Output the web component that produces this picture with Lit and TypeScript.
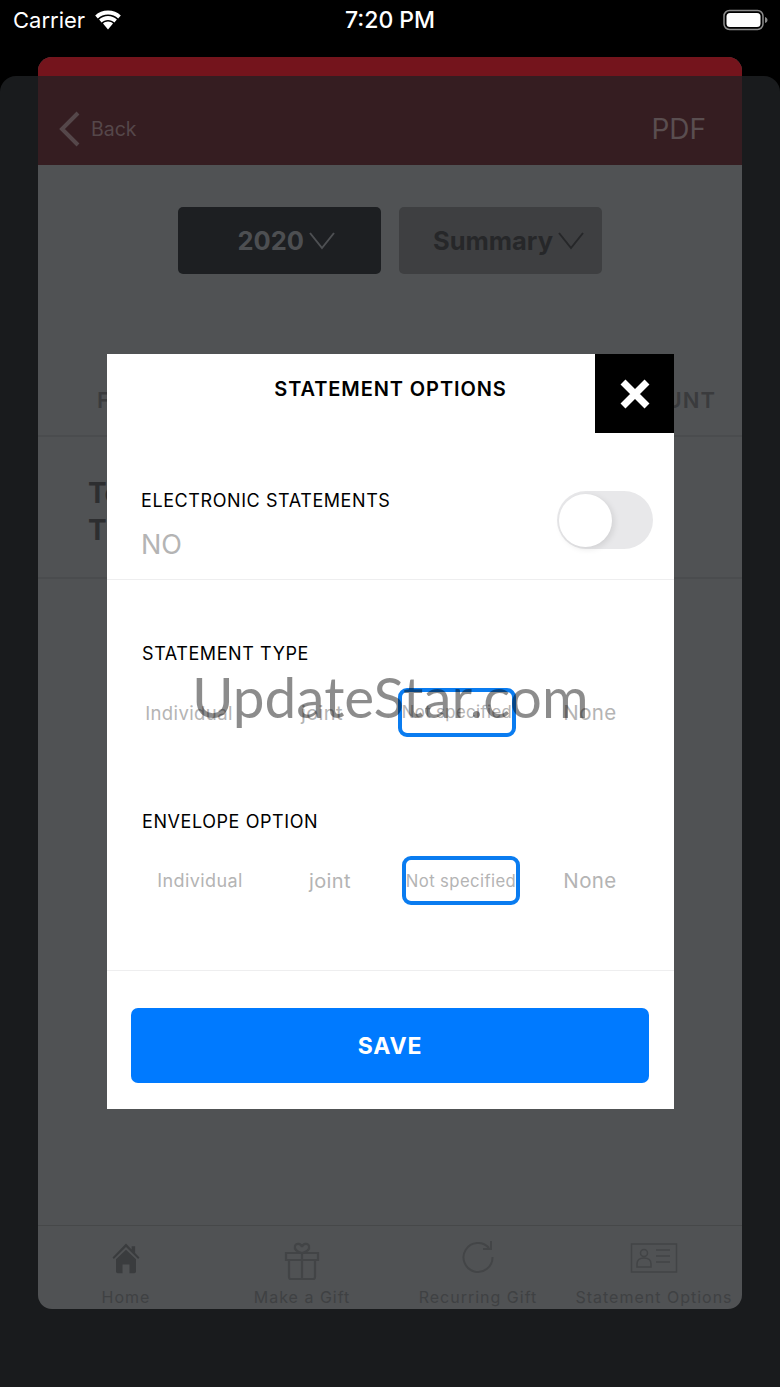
import { LitElement, html, css } from 'lit';
import { customElement } from 'lit/decorators.js';

const chevron = html`<svg class="drop" viewBox="0 0 26 18" fill="none" stroke="currentColor" stroke-width="2"><path d="M1 1l12 15L25 1" /></svg>`;

const tabs = [
    {
        label: 'Home',
        icon: html`<svg viewBox="-3 1 46 46" width="40" height="40" fill="#3a3c3e"><path d="M20 4L4.5 20l1.5 1.6L20 8l14 13.6 1.5-1.6-5-5.2V7h-4v3.8z" /><path d="M8.5 22L20 11l11.5 11v14a2 2 0 0 1-2 2H24V28h-8v10h-5.5a2 2 0 0 1-2-2z" /></svg>`,
    },
    {
        label: 'Make a Gift',
        icon: html`<svg viewBox="0 0 40 40" width="40" height="40" fill="none" stroke="#424446" stroke-width="2.2"><path d="M4 12h32v7H4zM7 19v17a2 2 0 0 0 2 2h22a2 2 0 0 0 2-2V19M20 12v26" /><path d="M20 12c-4-1-8-3-7-7 1-3 6-3 7 1 1-4 6-4 7-1 1 4-3 6-7 7z" /></svg>`,
    },
    {
        label: 'Recurring Gift',
        icon: html`<svg viewBox="0 3 40 40" width="40" height="40" fill="none" stroke="#434547" stroke-width="2"><path d="M31 10a14.5 14.5 0 1 0 3.500 9" /><path d="M33 3v8h-8" /></svg>`,
    },
    {
        label: 'Statement Options',
        icon: html`<svg viewBox="0 1 48 40" width="48" height="40" fill="none" stroke="#424446" stroke-width="1.500"><path d="M1.500 4h45v28h-45z" /><circle cx="14" cy="13" r="3.500" /><path d="M7 27v-3c0-4 3-6 7-6s7 2 7 6v3zM26 10h14M26 16h14M26 22h14" /></svg>`,
    },
];

@customElement('app-root')
class AppRoot extends LitElement {
    static styles = css`
        :host {
            display: block;
            position: relative;
            width: 780px;
            height: 1387px;
            overflow: hidden;
            background: #000;
            font-family: Inter, 'Liberation Sans', sans-serif;
        }

        .sheet {
            position: absolute;
            top: 76px;
            left: 0;
            right: 0;
            bottom: 0;
            background: #191b1d;
            border-radius: 16px 16px 0 0;
        }

        .status {
            position: relative;
            display: flex;
            align-items: center;
            height: 40px;
            padding: 0 12px 0 13px;
            color: #fff;
            font-size: 22px;
        }
        .status .time {
            position: absolute;
            left: 0;
            right: 0;
            text-align: center;
            font-size: 23px;
            font-weight: 500;
        }
        .status .wifi {
            margin-left: 9px;
        }
        .battery {
            margin-left: auto;
        }

        .card {
            position: relative;
            display: flex;
            flex-direction: column;
            height: 1252px;
            margin: 17px 38px 0;
            background: #505254;
            border-radius: 14px;
            overflow: hidden;
        }
        .strip {
            height: 19px;
            background: #74141c;
        }
        .bar {
            display: flex;
            align-items: center;
            height: 89px;
            box-sizing: border-box;
            padding: 17px 36px 0 21px;
            background: #351d21;
            color: #55474a;
            font-size: 19.500px;
        }
        .bar .back {
            margin-right: 11px;
        }
        .bar .pdf {
            margin-left: auto;
            font-size: 28px;
            color: #5a4e50;
        }

        .selectors {
            display: flex;
            justify-content: center;
            gap: 18px;
            padding-top: 42px;
        }
        .select {
            display: flex;
            align-items: center;
            justify-content: flex-end;
            gap: 5px;
            width: 203px;
            height: 67px;
            box-sizing: border-box;
            padding-right: 18px;
            border-radius: 5px;
            font-size: 25.500px;
            font-weight: 700;
        }
        .select.dark {
            background: #1d1f22;
            color: #4d4f52;
            padding-right: 46px;
        }
        .select.grey {
            background: #3e3f41;
            color: #262729;
        }
        .drop {
            width: 26px;
            height: 18px;
        }

        .head {
            display: flex;
            justify-content: space-between;
            padding: 114px 26px 23px 59px;
            border-bottom: 2px solid #4a4c4e;
            font-size: 22px;
            line-height: 24px;
            font-weight: 600;
            letter-spacing: 1px;
            color: #3a3b3d;
        }
        .totals {
            padding: 38px 0 28px 50px;
            border-bottom: 2px solid #4a4c4e;
            font-size: 28px;
            line-height: 37px;
            font-weight: 700;
            color: #2d2e30;
        }

        .tabbar {
            display: grid;
            grid-template-columns: repeat(4, 1fr);
            height: 83px;
            margin-top: auto;
            border-top: 1px solid #464849;
        }
        .tab {
            display: flex;
            flex-direction: column;
            align-items: center;
            padding-top: 15px;
            font-size: 16px;
            letter-spacing: 1px;
            white-space: nowrap;
            color: #3f4143;
        }
        .tab svg {
            height: 40px;
        }
        .tab span {
            margin-top: 6px;
        }

        .modal {
            position: absolute;
            top: 354px;
            left: 107px;
            width: 567px;
            height: 755px;
            background: #fff;
            color: #000;
        }
        .title {
            height: 79px;
            box-sizing: border-box;
            padding-top: 23px;
            text-align: center;
            font-size: 20px;
            line-height: 24px;
            font-weight: 600;
            letter-spacing: 0.9px;
        }
        .close {
            position: absolute;
            top: 0;
            right: 0;
            display: flex;
            align-items: center;
            justify-content: center;
            width: 79px;
            height: 79px;
            background: #000;
        }

        .electronic {
            display: flex;
            justify-content: space-between;
            height: 146px;
            padding: 0 21px 0 34px;
            border-bottom: 1px solid #eeeeef;
        }
        .label {
            font-size: 18px;
            line-height: 24px;
            letter-spacing: 0.58px;
        }
        .electronic .label {
            margin-top: 56px;
        }
        .no {
            margin-top: 14px;
            font-size: 27px;
            line-height: 36px;
            color: #b4b4b4;
        }
        .toggle {
            display: flex;
            align-items: center;
            width: 96px;
            height: 58px;
            margin-top: 58px;
            box-sizing: border-box;
            padding-left: 2px;
            background: #e8e8ea;
            border-radius: 29px;
        }
        .knob {
            width: 53px;
            height: 53px;
            background: #fff;
            border-radius: 50%;
            box-shadow: 2px 2px 6px rgba(0, 0, 0, 0.1);
        }

        .section {
            margin-left: 35px;
        }
        .section.type {
            margin-top: 62px;
        }
        .section.envelope {
            margin-top: 73px;
        }
        .options {
            display: grid;
            align-items: center;
            height: 49px;
            margin-top: 22px;
            color: #b4b4b4;
            text-align: center;
        }
        .options.type {
            grid-template-columns: 128px 138px 125px 148px;
            margin-left: 18px;
        }
        .options.envelope {
            grid-template-columns: 116px 144px 118px 140px;
            margin-left: 35px;
        }
        .options .wide {
            font-size: 18px;
            letter-spacing: 0.4px;
        }
        .options.type .wide {
            font-size: 18.500px;
        }
        .options .mid {
            font-size: 20px;
            letter-spacing: 0.4px;
        }
        .options .big {
            font-size: 20.500px;
            letter-spacing: 0.4px;
        }
        .chosen {
            justify-self: end;
            display: flex;
            align-items: center;
            justify-content: center;
            width: 118px;
            height: 49px;
            box-sizing: border-box;
            border: 4px solid #0a7cf0;
            border-radius: 9px;
            font-size: 16.700px;
            letter-spacing: 0.4px;
            white-space: nowrap;
        }
        .options.type .chosen span {
            margin-top: -1px;
        }

        .foot {
            margin-top: 65px;
            padding: 37px 25px 0 24px;
            border-top: 1px solid #eeeeef;
        }
        .save {
            display: flex;
            align-items: center;
            justify-content: center;
            height: 75px;
            background: #007aff;
            border-radius: 7px;
            color: #fff;
            font-size: 23px;
            font-weight: 700;
            letter-spacing: 0.8px;
        }

        .watermark {
            position: absolute;
            left: 192px;
            top: 656px;
            font-family: Lato, sans-serif;
            font-size: 56.700px;
            line-height: 80px;
            color: rgba(0, 0, 0, 0.45);
            white-space: nowrap;
        }
    `;

    optionRow(kind: string) {
        return html`
            <div class="options ${kind}">
                <div class="wide">Individual</div>
                <div class="mid">joint</div>
                <div class="chosen"><span>Not specified</span></div>
                <div class="big">None</div>
            </div>
        `;
    }

    render() {
        return html`
            <div class="sheet"></div>
            <div class="status">
                <span>Carrier</span>
                <svg class="wifi" width="28" height="20" viewBox="0 0 28 20" fill="#fff">
                    <path d="M14 4.500c4 0 7.500 1.500 10.200 4l2.600-3C23.500 2.300 19 .5 14 .5S4.500 2.300 1.200 5.500l2.600 3c2.700-2.500 6.200-4 10.200-4z" />
                    <path d="M14 10c2.500 0 4.700 1 6.400 2.500l2.500-3C20.500 7.300 17.400 6 14 6S7.500 7.300 5.100 9.500l2.500 3C9.300 11 11.500 10 14 10z" />
                    <path d="M14 11.500c-1.900 0-3.600.7-5 1.900l5 6.100 5-6.100c-1.400-1.200-3.100-1.900-5-1.900z" />
                </svg>
                <span class="time">7:20 PM</span>
                <svg class="battery" width="45" height="22" viewBox="0 0 45 22">
                    <rect x="1" y="1.500" width="39" height="19" rx="5.500" fill="none" stroke="#8b8b8b" stroke-width="1.500" />
                    <rect x="3.500" y="4" width="34" height="14" rx="3.500" fill="#fff" />
                    <path d="M42 8v6c1.500-.5 2.500-1.500 2.500-3s-1-2.500-2.500-3z" fill="#8b8b8b" />
                </svg>
            </div>

            <div class="card">
                <div class="strip"></div>
                <div class="bar">
                    <svg class="back" width="21" height="36" viewBox="0 0 21 36" fill="none" stroke="#55474a" stroke-width="4">
                        <path d="M19 2L3 18l16 16" />
                    </svg>
                    <span>Back</span>
                    <span class="pdf">PDF</span>
                </div>
                <div class="selectors">
                    <div class="select dark">2020${chevron}</div>
                    <div class="select grey">Summary${chevron}</div>
                </div>
                <div class="head"><span>FUND</span><span>AMOUNT</span></div>
                <div class="totals">Total<br />Tithes</div>
                <div class="tabbar">
                    ${tabs.map((tab) => html`<div class="tab">${tab.icon}<span>${tab.label}</span></div>`)}
                </div>
            </div>

            <div class="modal">
                <div class="title">STATEMENT OPTIONS</div>
                <div class="close">
                    <svg width="30" height="30" viewBox="0 0 30 30" stroke="#fff" stroke-width="7">
                        <path d="M3 3l24 24M27 3L3 27" />
                    </svg>
                </div>
                <div class="electronic">
                    <div>
                        <div class="label">ELECTRONIC STATEMENTS</div>
                        <div class="no">NO</div>
                    </div>
                    <div class="toggle"><div class="knob"></div></div>
                </div>
                <div class="section type label">STATEMENT TYPE</div>
                ${this.optionRow('type')}
                <div class="section envelope label">ENVELOPE OPTION</div>
                ${this.optionRow('envelope')}
                <div class="foot"><div class="save">SAVE</div></div>
            </div>

            <div class="watermark">UpdateStar.com</div>
        `;
    }
}

declare global {
    interface HTMLElementTagNameMap {
        'app-root': AppRoot;
    }
}
